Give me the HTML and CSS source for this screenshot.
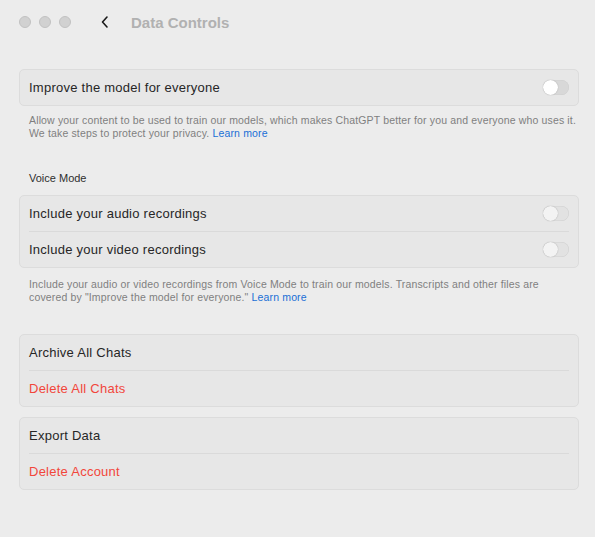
FILE: index.html
```html
<!DOCTYPE html>
<html lang="en">
<head>
    <meta charset="UTF-8">
    <meta name="viewport" content="width=device-width, initial-scale=1.0">
    <title>Data Controls</title>
    <link rel="stylesheet" href="styles.css">
</head>
<body>
    <div class="window">
        <div class="titlebar">
            <div class="lights">
                <span class="light"></span>
                <span class="light"></span>
                <span class="light"></span>
            </div>
            <svg class="back" width="10" height="14" viewBox="0 0 10 14">
                <path d="M7 2 L2.5 7 L7 12" fill="none" stroke="#1a1a1a" stroke-width="1.6" stroke-linecap="round" stroke-linejoin="round"/>
            </svg>
            <div class="title">Data Controls</div>
        </div>

        <div class="content">
            <div class="card">
                <div class="row">
                    <span>Improve the model for everyone</span>
                    <span class="toggle"></span>
                </div>
            </div>
            <p class="note">Allow your content to be used to train our models, which makes ChatGPT better for you and everyone who uses it.<br>We take steps to protect your privacy. <a href="#">Learn more</a></p>

            <div class="section-label">Voice Mode</div>
            <div class="card">
                <div class="row">
                    <span>Include your audio recordings</span>
                    <span class="toggle dim"></span>
                </div>
                <div class="row">
                    <span>Include your video recordings</span>
                    <span class="toggle dim"></span>
                </div>
            </div>
            <p class="note second">Include your audio or video recordings from Voice Mode to train our models. Transcripts and other files are<br>covered by "Improve the model for everyone." <a href="#">Learn more</a></p>

            <div class="card gap-top">
                <div class="row">Archive All Chats</div>
                <div class="row danger">Delete All Chats</div>
            </div>
            <div class="card">
                <div class="row">Export Data</div>
                <div class="row danger">Delete Account</div>
            </div>
        </div>
    </div>
</body>
</html>
```

FILE: styles.css
```css
body {
    margin: 0;
    background-color: #ececec;
    font-family: "Liberation Sans", Arial, sans-serif;
    color: #262626;
}

.window {
    width: 595px;
    height: 537px;
}

.titlebar {
    display: flex;
    align-items: center;
    height: 44px;
    padding-left: 19px;
}

.lights {
    display: flex;
    gap: 8px;
}

.light {
    box-sizing: border-box;
    width: 12px;
    height: 12px;
    border-radius: 50%;
    background-color: #d1d1d1;
    border: 0.5px solid #c2c2c2;
}

.back {
    margin-left: 29px;
}

.title {
    margin-left: 21px;
    font-size: 15px;
    font-weight: bold;
    color: #b1b1b1;
}

.content {
    padding: 25px 16px 0 19px;
}

.card {
    background-color: #e7e7e7;
    border: 1px solid #dcdcdc;
    border-radius: 5px;
    padding: 0 9px;
}

.card + .card {
    margin-top: 10px;
}

.row {
    display: flex;
    justify-content: space-between;
    align-items: center;
    height: 35px;
    font-size: 13px;
    letter-spacing: 0.25px;
}

.row + .row {
    border-top: 1px solid #dadada;
}

.danger {
    color: #f2463b;
}

.toggle {
    position: relative;
    width: 26px;
    height: 15px;
    border-radius: 8px;
    background-color: #d8d8d8;
    box-shadow: inset 0 0 0 0.5px #cfcfcf;
}

.toggle::after {
    content: "";
    position: absolute;
    left: 0;
    top: 0;
    width: 15px;
    height: 15px;
    border-radius: 50%;
    background-color: #fff;
    box-shadow: 0 0 1px rgba(0, 0, 0, 0.35);
}

.toggle.dim {
    background-color: #e2e2e2;
}

.toggle.dim::after {
    background-color: #f3f3f3;
}

.note {
    margin: 8px 0 0 10px;
    font-size: 10.5px;
    line-height: 13px;
    letter-spacing: 0.15px;
    white-space: nowrap;
    color: #7f7f7f;
}

.note.second {
    margin-top: 10px;
}

.note a {
    color: #1a6fd6;
    text-decoration: none;
}

.section-label {
    margin: 32px 0 11px 10px;
    font-size: 11px;
    color: #2e2e2e;
}

.gap-top {
    margin-top: 30px;
}
```
